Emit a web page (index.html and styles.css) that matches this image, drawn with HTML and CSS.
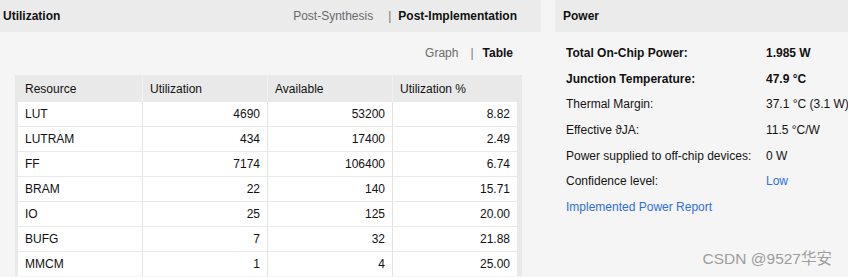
FILE: index.html
```html
<!DOCTYPE html>
<html lang="en">
<head>
<meta charset="utf-8">
<title>Utilization / Power</title>
<link rel="stylesheet" href="styles.css">
</head>
<body>
<div class="page">
  <section class="panel util">
    <header class="panel-head">
      <span class="title">Utilization</span>
      <nav class="tabs">
        <span class="tab">Post-Synthesis</span>
        <span class="sep">|</span>
        <span class="tab active">Post-Implementation</span>
      </nav>
    </header>
    <div class="subtabs">
      <span class="tab">Graph</span>
      <span class="sep">|</span>
      <span class="tab active">Table</span>
    </div>
    <div class="tbl">
      <div class="row head">
        <div class="cell">Resource</div>
        <div class="cell">Utilization</div>
        <div class="cell">Available</div>
        <div class="cell">Utilization %</div>
      </div>
      <div class="row"><div class="cell">LUT</div><div class="cell num">4690</div><div class="cell num">53200</div><div class="cell num">8.82</div></div>
      <div class="row"><div class="cell">LUTRAM</div><div class="cell num">434</div><div class="cell num">17400</div><div class="cell num">2.49</div></div>
      <div class="row"><div class="cell">FF</div><div class="cell num">7174</div><div class="cell num">106400</div><div class="cell num">6.74</div></div>
      <div class="row"><div class="cell">BRAM</div><div class="cell num">22</div><div class="cell num">140</div><div class="cell num">15.71</div></div>
      <div class="row"><div class="cell">IO</div><div class="cell num">25</div><div class="cell num">125</div><div class="cell num">20.00</div></div>
      <div class="row"><div class="cell">BUFG</div><div class="cell num">7</div><div class="cell num">32</div><div class="cell num">21.88</div></div>
      <div class="row"><div class="cell">MMCM</div><div class="cell num">1</div><div class="cell num">4</div><div class="cell num">25.00</div></div>
    </div>
  </section>
  <section class="panel power">
    <header class="panel-head">
      <span class="title">Power</span>
    </header>
    <div class="plist">
      <div class="prow"><span class="lbl strong">Total On-Chip Power:</span><span class="val strong">1.985 W</span></div>
      <div class="prow"><span class="lbl strong">Junction Temperature:</span><span class="val strong">47.9 °C</span></div>
      <div class="prow"><span class="lbl">Thermal Margin:</span><span class="val">37.1 °C (3.1 W)</span></div>
      <div class="prow"><span class="lbl">Effective ϑJA:</span><span class="val">11.5 °C/W</span></div>
      <div class="prow"><span class="lbl">Power supplied to off-chip devices:</span><span class="val">0 W</span></div>
      <div class="prow"><span class="lbl">Confidence level:</span><span class="val link">Low</span></div>
      <div class="prow"><span class="lbl link">Implemented Power Report</span></div>
    </div>
  </section>
</div>
<div class="watermark">CSDN @9527华安</div>
</body>
</html>
```
FILE: styles.css
```css
html, body {
  margin: 0;
  padding: 0;
}
body {
  background: #f5f5f5;
  font-family: "Liberation Sans", Arial, sans-serif;
  font-size: 12px;
  color: #141414;
  width: 848px;
  height: 277px;
  overflow: hidden;
  position: relative;
}
.page {
  display: flex;
  gap: 14px;
}
.panel.util {
  width: 541px;
  flex: none;
}
.panel.power {
  flex: 1;
  min-width: 0;
  white-space: nowrap;
}
.panel-head {
  height: 32px;
  background: #ebebeb;
  display: flex;
  justify-content: space-between;
  align-items: flex-start;
  line-height: 32px;
}
.util .panel-head {
  padding: 0 24px 0 3px;
}
.power .panel-head {
  padding: 0 0 0 8px;
}
.title {
  font-weight: bold;
  color: #111;
}
.tabs, .subtabs {
  display: flex;
}
.tab {
  color: #6a6a6a;
}
.tab.active {
  color: #111;
  font-weight: bold;
}
.sep {
  color: #777;
}
.tabs .tab:first-child {
  margin-right: 15px;
}
.tabs .sep {
  margin-right: 7px;
}
.subtabs {
  height: 43px;
  box-sizing: border-box;
  padding: 11px 28px 0 0;
  line-height: 20px;
  justify-content: flex-end;
}
.subtabs .tab:first-child {
  margin-right: 12px;
}
.subtabs .sep {
  margin-right: 9px;
}
.tbl {
  margin-left: 15px;
  width: 507px;
  box-sizing: border-box;
  padding: 0 5px 0 3px;
  background: #e9e9e9;
  display: flex;
  flex-direction: column;
  gap: 1px;
}
.row {
  display: grid;
  grid-template-columns: repeat(4, 124px);
  column-gap: 1px;
  background: #e3e3e3;
  height: 24px;
}
.row.head {
  background: #f1f1f1;
  height: 27px;
  margin: 0 -5px 0 -3px;
  padding: 0 5px 0 3px;
  background-clip: content-box;
  margin-bottom: -1px;
}
.cell {
  background: #fff;
  padding: 1px 7px 0;
  line-height: 23px;
  color: #111;
  overflow: hidden;
  white-space: nowrap;
}
.head .cell {
  background: #e9e9e9;
  padding-top: 2px;
  line-height: 25px;
}
.cell.num {
  text-align: right;
}
.plist {
  padding: 9px 0 0 11px;
}
.prow {
  display: flex;
  height: 25.67px;
  line-height: 25.67px;
}
.lbl {
  width: 200px;
  flex: none;
}
.strong {
  font-weight: bold;
  color: #111;
}
.link {
  color: #2f6fde;
}
.prow .lbl.link {
  width: auto;
}
.watermark {
  position: absolute;
  right: 16px;
  top: 249px;
  font-family: "Liberation Sans", "Noto Sans CJK SC", sans-serif;
  font-size: 15.5px;
  color: #9d9d9d;
  line-height: 20px;
}
```
